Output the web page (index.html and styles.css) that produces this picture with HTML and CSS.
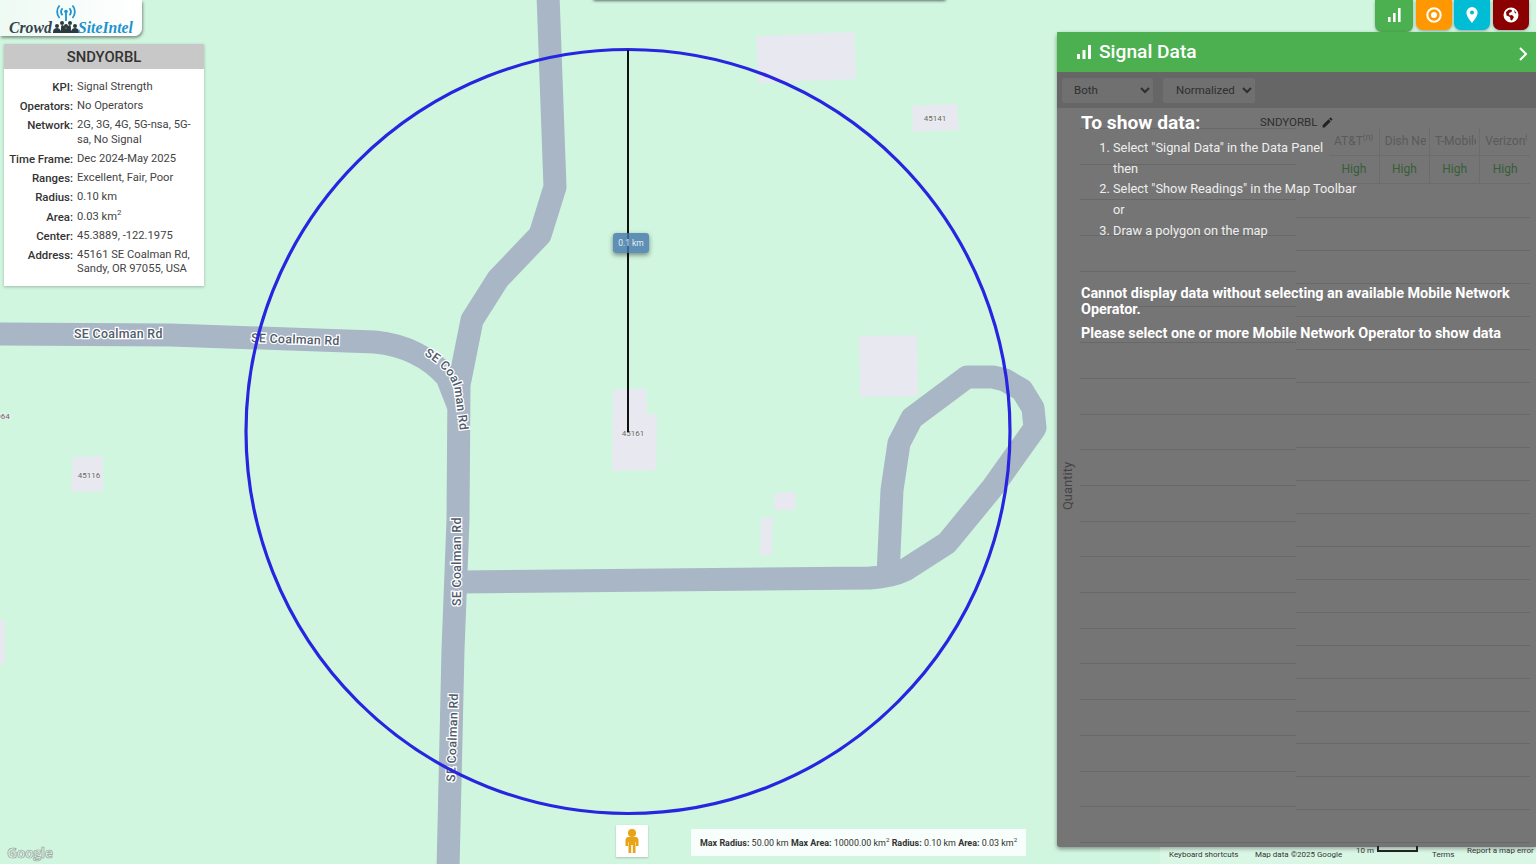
FILE: index.html
```html
<!DOCTYPE html>
<html>
  <head>
    <title>CrowdSiteIntel</title>
    <link rel="stylesheet" href="styles.css">
  </head>
  <body>
    <div class="map">
      <!-- map tiles: buildings, roads, radius circle -->
      <svg class="map-canvas" width="1536" height="864" viewBox="0 0 1536 864">
        <g class="building">
          <polygon points="756,36 854,32 856,79 758,83" />
          <polygon points="912,106 957,104 959,130 913,132" />
          <polygon points="859,336 917,335 918,396 860,397" />
          <polygon points="613,390 646,388 647,414 657,414 656,470 612,471" />
          <polygon points="73,457 103,456 103,491 71,492" />
          <polygon points="775,493 796,492 795,510 774,510" />
          <polygon points="761,518 773,517 772,555 760,555" />
          <polygon points="0,620 5,620 5,665 0,665" />
        </g>
        <g class="road">
          <polyline points="548,-5 555,187 540,235 498,279 472,320 459,385 458,520 453,650 448,870" />
          <path d="M-5,334 L170,335 L375,342 C405,345 430,358 447,377 L458,405" />
          <path d="M458,582 L870,578 C885,577 895,575 905,570 L947,543 L993,487 L1035,428 L1033,408 L1022,390 L1005,380 L993,377 L967,377 L912,418 L899,443 L892,490 L888,575" />
        </g>
        <g class="road-label">
          <defs>
            <path id="bend" d="M424,355 C440,364 452,376 455,392 L460,432" />
          </defs>
          <text x="74" y="338">SE Coalman Rd</text>
          <text x="251" y="342" transform="rotate(2 251 342)">SE Coalman Rd</text>
          <text><textPath href="#bend">SE Coalman Rd</textPath></text>
          <text x="461" y="606" transform="rotate(-90 461 606)">SE Coalman Rd</text>
          <text x="455" y="782" transform="rotate(-88 455 782)">SE Coalman Rd</text>
        </g>
        <g class="house-no">
          <text x="935" y="121">45141</text>
          <text x="89" y="478">45116</text>
          <text x="633" y="436">45161</text>
          <text x="3" y="419">964</text>
        </g>
        <circle class="radius" cx="628" cy="431.5" r="382" />
        <line class="radius-line" x1="628" y1="50" x2="628" y2="432" />
      </svg>

      <div class="top-bar"></div>

      <div class="logo">
        <svg class="logo-signal" width="24" height="20" viewBox="0 0 24 20">
          <path d="M5.500 1.500a9.500 9.500 0 0 0 0 12.500M18.500 1.500a9.500 9.500 0 0 1 0 12.500M8.500 4.200a5.500 5.500 0 0 0 0 7M15.500 4.200a5.500 5.500 0 0 1 0 7" />
          <circle cx="12" cy="7.500" r="1.800" />
          <line x1="12" y1="8" x2="12" y2="17" />
        </svg>
        <span class="logo-crowd">Crowd</span>
        <svg class="logo-people" width="26" height="14" viewBox="0 0 26 14">
          <circle cx="4" cy="6" r="2" /><circle cx="9" cy="3" r="2" /><circle cx="13" cy="6" r="2" />
          <circle cx="17" cy="3" r="2" /><circle cx="22" cy="6" r="2" />
          <path d="M0 12c0-3 2-4 4-4s3 1 4 3c0-4 0-6 1-6s3 1 4 4c1-3 3-4 4-4s1 3 1 6c1-2 2-3 4-3s4 1 4 4v1H0z" />
        </svg>
        <span class="logo-site">SiteIntel</span>
      </div>

      <div class="info-card">
        <div class="info-title">SNDYORBL</div>
        <dl class="info-rows">
          <dt>KPI:</dt><dd>Signal Strength</dd>
          <dt>Operators:</dt><dd>No Operators</dd>
          <dt>Network:</dt><dd>2G, 3G, 4G, 5G-nsa, 5G-sa, No Signal</dd>
          <dt>Time Frame:</dt><dd>Dec 2024-May 2025</dd>
          <dt>Ranges:</dt><dd>Excellent, Fair, Poor</dd>
          <dt>Radius:</dt><dd>0.10 km</dd>
          <dt>Area:</dt><dd>0.03 km<sup>2</sup></dd>
          <dt>Center:</dt><dd>45.3889, -122.1975</dd>
          <dt>Address:</dt><dd>45161 SE Coalman Rd, Sandy, OR 97055, USA</dd>
        </dl>
      </div>

      <div class="distance-tag">0.1 km</div>

      <div class="toolbar">
        <button class="tool tool-green">
          <svg width="16" height="16" viewBox="0 0 16 16"><path d="M2 10h2.600v5H2zM7 6h2.600v9H7zM12 1h2.600v14H12z" /></svg>
        </button>
        <button class="tool tool-orange">
          <svg width="18" height="18" viewBox="0 0 18 18"><circle class="ring" cx="9" cy="9" r="6.700" /><circle cx="9" cy="9" r="3" /></svg>
        </button>
        <button class="tool tool-cyan">
          <svg width="14" height="18" viewBox="0 0 14 18"><path fill-rule="evenodd" d="M7 1a5.600 5.600 0 0 0-5.600 5.600C1.400 10.800 7 17 7 17s5.600-6.200 5.600-10.400A5.600 5.600 0 0 0 7 1zm0 7.600a2 2 0 1 1 0-4 2 2 0 0 1 0 4z" /></svg>
        </button>
        <button class="tool tool-red">
          <svg width="18" height="18" viewBox="0 0 18 18"><path fill-rule="evenodd" d="M9 1.500a7.500 7.500 0 1 0 0 15 7.500 7.500 0 0 0 0-15zM4 6l3-2.500 3 .5-.5 2L7 7l.5 2.500L10 9l2 2-2 3.500-1.500-.5L8 11 4.500 9.500zM12 4l2.500 3-1.500.5z" /></svg>
        </button>
      </div>

      <section class="panel">
        <header class="panel-head">
          <svg class="head-icon" width="18" height="18" viewBox="0 0 18 18"><path d="M2 11h3v5H2zM7.500 7h3v9h-3zM13 2h3v14h-3z" /></svg>
          <h2>Signal Data</h2>
          <svg class="head-chevron" width="12" height="16" viewBox="0 0 12 16"><path d="M3 2l6 6-6 6" /></svg>
        </header>
        <div class="panel-filters">
          <select class="filter filter-both"><option>Both</option></select>
          <select class="filter filter-norm"><option>Normalized</option></select>
        </div>
        <div class="panel-body">
          <div class="chart-left"></div>
          <div class="chart-right">
            <table class="kpi-table">
              <tr>
                <th><span>AT&amp;T<sup>(n)</sup></span></th>
                <th><span>Dish Network</span></th>
                <th><span>T-Mobile</span></th>
                <th><span>Verizon<sup>(n)</sup></span></th>
              </tr>
              <tr>
                <td>High</td><td>High</td><td>High</td><td>High</td>
              </tr>
            </table>
            <div class="chart-lines"></div>
          </div>
          <div class="y-label">Quantity</div>
          <div class="site-tag">
            SNDYORBL
            <svg width="13" height="13" viewBox="0 0 24 24"><path d="M3 17.250V21h3.750L17.810 9.940l-3.750-3.750L3 17.250zM20.710 7.040a1 1 0 0 0 0-1.410l-2.340-2.340a1 1 0 0 0-1.410 0l-1.830 1.830 3.750 3.750 1.830-1.830z" /></svg>
          </div>
          <div class="notice">
            <h3>To show data:</h3>
            <ol>
              <li value="1">Select "Signal Data" in the Data Panel</li>
              <li class="no-num">then</li>
              <li value="2">Select "Show Readings" in the Map Toolbar</li>
              <li class="no-num">or</li>
              <li value="3">Draw a polygon on the map</li>
            </ol>
            <p>Cannot display data without selecting an available Mobile Network Operator.</p>
            <p>Please select one or more Mobile Network Operator to show data</p>
          </div>
        </div>
      </section>

      <div class="pegman">
        <svg width="16" height="26" viewBox="0 0 16 26">
          <circle cx="8" cy="5" r="4" />
          <path d="M4.500 9h7c2 0 3 1.500 3 3.500V18h-2.500v-4l-.5 0V25H8.800v-8H7.200v8H4.500V14H4v4H1.500v-5.500C1.500 10.500 2.500 9 4.500 9z" />
        </svg>
      </div>

      <div class="status-box">
        <b>Max Radius:</b> 50.00 km <b>Max Area:</b> 10000.00 km<sup>2</sup>
        <b>Radius:</b> 0.10 km <b>Area:</b> 0.03 km<sup>2</sup>
      </div>

      <div class="google-mark">Google</div>

      <div class="attribution">
        <span class="attr-keys">Keyboard shortcuts</span>
        <span class="attr-data">Map data ©2025 Google</span>
        <span class="attr-scale">10 m <i class="scale-bar"></i></span>
        <span class="attr-terms">Terms</span>
        <span class="attr-error">Report a map error</span>
      </div>
    </div>
  </body>
</html>
```

FILE: styles.css
```css
* {
  box-sizing: border-box;
}

body {
  margin: 0;
  font-family: "Roboto", sans-serif;
  overflow: hidden;
}

.map {
  position: relative;
  width: 1536px;
  height: 864px;
  overflow: hidden;
  background-color: #d1f6e0;
}

.map-canvas {
  position: absolute;
  left: 0;
  top: 0;
}

.building polygon {
  fill: #e8e8f0;
}

.road polyline,
.road path {
  fill: none;
  stroke: #a8b6c6;
  stroke-width: 23;
  stroke-linejoin: round;
}

.road-label text {
  font-family: "Roboto", sans-serif;
  font-size: 12.300px;
  font-weight: 500;
  letter-spacing: 0.35px;
  fill: #4f5b6b;
  stroke: #fff;
  stroke-width: 2.500px;
  paint-order: stroke;
}

.house-no text {
  font-size: 8px;
  text-anchor: middle;
  fill: #666;
  stroke: #eee;
  stroke-width: 1.500px;
  paint-order: stroke;
}

.radius {
  fill: none;
  stroke: #2626e0;
  stroke-width: 3.200;
}

.radius-line {
  stroke: #111;
  stroke-width: 2;
}

.top-bar {
  position: absolute;
  left: 593px;
  top: -4px;
  width: 353px;
  height: 4px;
  border-radius: 3px;
  box-shadow: 0 1px 3px rgba(0, 0, 0, 0.55);
  background-color: #fff;
}

/* logo */
.logo {
  position: absolute;
  left: 0;
  top: 0;
  width: 142px;
  height: 36px;
  background: linear-gradient(to right, #eefaf4, #fff);
  border-bottom-right-radius: 8px;
  box-shadow: 1px 2px 3px rgba(0, 0, 0, 0.4);
}

.logo-signal {
  position: absolute;
  left: 54px;
  top: 4px;
}

.logo-signal path,
.logo-signal line {
  fill: none;
  stroke: #1f93cc;
  stroke-width: 1.800;
}

.logo-signal circle {
  fill: #1f93cc;
}

.logo-crowd,
.logo-site {
  position: absolute;
  top: 19px;
  font-family: "Liberation Serif", serif;
  font-size: 15.700px;
  font-style: italic;
  font-weight: bold;
  line-height: 18px;
}

.logo-crowd {
  left: 9px;
  color: #33444c;
}

.logo-site {
  left: 78px;
  color: #1f93cc;
}

.logo-people {
  position: absolute;
  left: 53px;
  top: 20px;
  fill: #2c3a40;
}

/* info card */
.info-card {
  position: absolute;
  left: 4px;
  top: 44px;
  width: 200px;
  height: 242px;
  background-color: #fff;
  box-shadow: 0 1px 3px rgba(0, 0, 0, 0.25);
}

.info-title {
  height: 25px;
  line-height: 26px;
  text-align: center;
  background-color: #c8c8c8;
  color: #333;
  font-size: 14.800px;
  font-weight: 500;
}

.info-rows {
  display: grid;
  grid-template-columns: 69px 1fr;
  column-gap: 4px;
  row-gap: 4.800px;
  margin: 0;
  padding: 11px 10px 0 0;
  font-size: 11.200px;
  line-height: 14.400px;
  color: #444;
}

.info-rows dt {
  text-align: right;
  font-size: 11.400px;
  font-weight: 500;
  color: #333;
  white-space: nowrap;
}

.info-rows dd {
  margin: 0;
}

sup {
  font-size: 70%;
  line-height: 0;
}

.distance-tag {
  position: absolute;
  left: 613px;
  top: 233px;
  width: 36px;
  height: 20px;
  border-radius: 3px;
  background-color: rgba(68, 120, 170, 0.82);
  box-shadow: 0 2px 5px rgba(0, 0, 0, 0.45);
  color: #e8eef4;
  font-size: 8.500px;
  line-height: 20px;
  text-align: center;
}

/* map toolbar */
.toolbar {
  position: absolute;
  left: 1375px;
  top: 0;
  display: flex;
  gap: 3px;
}

.tool {
  display: flex;
  align-items: center;
  justify-content: center;
  width: 36px;
  height: 30px;
  padding: 0;
  border: 0;
  border-radius: 0 0 7px 7px;
  fill: #fff;
  box-shadow: 0 1px 3px rgba(0, 0, 0, 0.3);
}

.tool-green {
  width: 38px;
  height: 32px;
  padding-bottom: 2px;
  background-color: #4caf50;
}

.tool-orange {
  background-color: #ff9800;
}

.tool-cyan {
  width: 36px;
  margin-left: -1px;
  background-color: #00bcd4;
}

.tool-red {
  background-color: #8b0000;
}

.ring {
  fill: none;
  stroke: #fff;
  stroke-width: 2;
}

/* data panel */
.panel {
  position: absolute;
  left: 1057px;
  top: 32px;
  width: 479px;
  height: 815px;
  display: flex;
  flex-direction: column;
  background-color: #757575;
  border-radius: 3px 0 0 3px;
  box-shadow: 0 2px 4px rgba(0, 0, 0, 0.4);
}

.panel-head {
  display: flex;
  align-items: center;
  height: 40px;
  padding: 0 7px 0 18px;
  background-color: #4caf50;
  color: #fff;
  fill: #fff;
}

.panel-head h2 {
  margin: 0 0 2px 6px;
  font-size: 19.200px;
  font-weight: 500;
}

.head-chevron {
  margin-left: auto;
  margin-top: 4px;
  fill: none;
  stroke: #fff;
  stroke-width: 2;
}

.panel-filters {
  display: flex;
  gap: 10px;
  height: 36px;
  padding: 6px 5px 5px;
  background-color: #666;
}

.filter {
  height: 25px;
  border: 0;
  border-radius: 2px;
  padding: 0 4px 2px 8px;
  background-color: #707070;
  color: #2f2f2f;
  font-family: "Roboto", sans-serif;
  font-size: 11.500px;
}

.filter-both {
  width: 91px;
}

.filter-norm {
  width: 92px;
  padding-left: 9px;
}

.panel-body {
  position: relative;
  flex: 1;
  display: flex;
  padding-left: 23px;
  overflow: hidden;
}

.chart-left {
  width: 216px;
  margin-top: 20px;
  background-image: repeating-linear-gradient(to bottom, #686868 0, #686868 1px, transparent 1px, transparent 35.700px);
}

.chart-right {
  width: 234px;
  padding-left: 33px;
  display: flex;
  flex-direction: column;
  margin-top: 20px;
}

.kpi-table {
  width: 201px;
  height: 56px;
  table-layout: fixed;
  border-collapse: collapse;
  font-size: 12px;
  text-align: center;
}

.kpi-table th,
.kpi-table td {
  padding: 0;
  border-left: 1px solid #6c6c6c;
  border-bottom: 1px solid #6c6c6c;
  font-weight: normal;
}

.kpi-table th {
  height: 27px;
  color: #5a5a5a;
  text-align: left;
}

.kpi-table th span {
  display: block;
  margin: 0 3px 0 5px;
  overflow: hidden;
  white-space: nowrap;
}

.kpi-table td {
  color: #355f38;
}

.kpi-table tr :first-child {
  border-left: 0;
}

.chart-lines {
  flex: 1;
  margin: 33px 0 0 -33px;
  background-image: repeating-linear-gradient(to bottom, #686868 0, #686868 1px, transparent 1px, transparent 32.900px);
}

.y-label {
  position: absolute;
  left: 3px;
  top: 354px;
  transform: rotate(-90deg);
  transform-origin: center;
  width: 14px;
  height: 48px;
  display: flex;
  align-items: center;
  justify-content: center;
  font-size: 13px;
  color: #444;
}

.site-tag {
  position: absolute;
  left: 203px;
  top: 7px;
  display: flex;
  align-items: center;
  gap: 4px;
  font-size: 11.500px;
  color: #2e2e2e;
  fill: #222;
}

.notice {
  position: absolute;
  left: 24px;
  top: 3px;
  width: 450px;
  color: #fff;
}

.notice h3 {
  margin: 0;
  font-size: 19.200px;
  font-weight: 700;
  line-height: 24px;
}

.notice ol {
  margin: 3px 0 0;
  padding: 0 0 0 32px;
  font-size: 12.800px;
  line-height: 20.700px;
  color: #eee;
}

.no-num {
  list-style: none;
}

.notice p {
  margin: 0 0 8px;
  font-size: 14.400px;
  font-weight: 700;
  line-height: 16px;
}

.notice ol + p {
  margin-top: 44px;
}

/* bottom of the map */
.pegman {
  position: absolute;
  left: 616px;
  top: 825px;
  width: 32px;
  height: 32px;
  display: flex;
  align-items: center;
  justify-content: center;
  background-color: #fff;
  fill: #e8a317;
  box-shadow: 0 1px 2px rgba(0, 0, 0, 0.2);
}

.status-box {
  position: absolute;
  left: 691px;
  top: 829px;
  width: 335px;
  height: 27px;
  padding-left: 9px;
  background-color: rgba(255, 255, 255, 0.85);
  color: #333;
  font-size: 8.950px;
  line-height: 28px;
  white-space: nowrap;
}

.status-box b {
  font-weight: 700;
}

.google-mark {
  position: absolute;
  left: 7px;
  top: 844px;
  font-family: "Open Sans", sans-serif;
  font-size: 14px;
  font-weight: 700;
  line-height: 18px;
  letter-spacing: -0.4px;
  color: #e4f4ea;
  -webkit-text-stroke: 0.7px #8f9f97;
}

.attribution {
  position: absolute;
  left: 1160px;
  top: 847px;
  width: 376px;
  height: 17px;
  background-color: rgba(255, 255, 255, 0.2);
  color: #333;
  font-size: 8px;
}

.attribution span {
  position: absolute;
  white-space: nowrap;
}

.attr-keys {
  left: 9px;
  top: 3px;
}

.attr-data {
  left: 95px;
  top: 3px;
}

.attr-scale {
  left: 196px;
  top: -1px;
  display: flex;
  gap: 3px;
}

.scale-bar {
  width: 41px;
  height: 6px;
  margin-top: 0;
  border: 2px solid #222;
  border-top: 0;
}

.attr-terms {
  left: 272px;
  top: 3px;
}

.attr-error {
  left: 307px;
  top: -1px;
}
```
